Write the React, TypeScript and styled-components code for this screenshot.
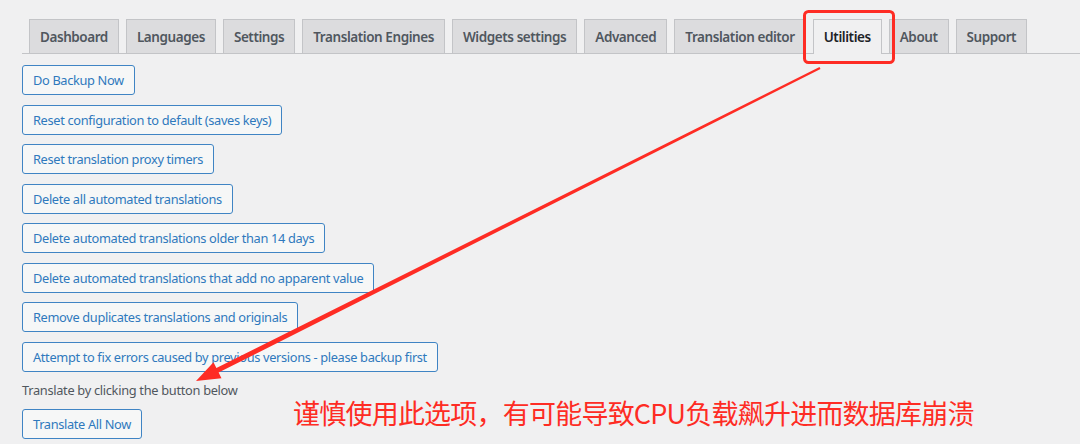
import React from 'react';
import styled, { createGlobalStyle } from 'styled-components';

const GlobalStyle = createGlobalStyle`
  html, body {
    margin: 0;
    padding: 0;
    background: #f0f0f1;
  }
  body {
    font-family: "Noto Sans", "Liberation Sans", sans-serif;
    color: #3c434a;
  }
`;

const Page = styled.div`
  position: relative;
  width: 1080px;
  height: 444px;
  overflow: hidden;
  padding-left: 22px;
  box-sizing: border-box;
`;

const TabBar = styled.nav`
  display: flex;
  align-items: flex-end;
  padding-top: 19px;
  padding-left: 7px;
  border-bottom: 1px solid #c3c4c7;
  gap: 7px;
`;

const Tab = styled.a<{ $active?: boolean }>`
  display: block;
  padding: 5px 10px 4px;
  font-size: 13.5px;
  font-weight: 600;
  line-height: 24px;
  letter-spacing: -0.43px;
  border: 1px solid #c3c4c7;
  border-bottom: none;
  margin-bottom: ${(p) => (p.$active ? '-1px' : '0')};
  padding-bottom: ${(p) => (p.$active ? '5px' : '4px')};
  background: ${(p) => (p.$active ? '#f0f0f1' : '#dcdcde')};
  color: ${(p) => (p.$active ? '#1d2327' : '#50575e')};
  white-space: nowrap;
  text-decoration: none;
`;

const Tools = styled.div`
  display: flex;
  flex-direction: column;
  align-items: flex-start;
  gap: 9.5px;
  padding-top: 11px;
`;

const Button = styled.button`
  height: 30px;
  padding: 0 10px;
  font-family: inherit;
  font-size: 12.8px;
  letter-spacing: -0.34px;
  color: #2f79bd;
  background: #f6f7f7;
  border: 1px solid #3f84c4;
  border-radius: 3px;
  cursor: pointer;
  white-space: nowrap;
`;

const Hint = styled.p`
  margin: 0;
  font-size: 12.8px;
  letter-spacing: -0.3px;
  line-height: 18px;
  color: #50575e;
`;

const Overlay = styled.svg`
  position: absolute;
  left: 0;
  top: 0;
  pointer-events: none;
`;

const Warning = styled.div`
  position: absolute;
  left: 293px;
  top: 395px;
  font-family: "Noto Sans CJK SC", "Noto Sans", sans-serif;
  font-size: 27px;
  letter-spacing: -0.78px;
  line-height: 36px;
  color: #fe2c24;
  white-space: nowrap;
`;

const tabs = [
  'Dashboard',
  'Languages',
  'Settings',
  'Translation Engines',
  'Widgets settings',
  'Advanced',
  'Translation editor',
  'Utilities',
  'About',
  'Support',
];

const actions = [
  'Do Backup Now',
  'Reset configuration to default (saves keys)',
  'Reset translation proxy timers',
  'Delete all automated translations',
  'Delete automated translations older than 14 days',
  'Delete automated translations that add no apparent value',
  'Remove duplicates translations and originals',
  'Attempt to fix errors caused by previous versions - please backup first',
];

const App: React.FC = () => {
  return (
    <>
      <GlobalStyle />
      <Page>
        <TabBar>
          {tabs.map((t) => (
            <Tab key={t} $active={t === 'Utilities'}>
              {t}
            </Tab>
          ))}
        </TabBar>
        <Tools>
          {actions.map((a) => (
            <Button key={a}>{a}</Button>
          ))}
          <Hint>Translate by clicking the button below</Hint>
          <Button>Translate All Now</Button>
        </Tools>

        {/* red annotation drawn over the screenshot */}
        <Overlay width="1080" height="444" viewBox="0 0 1080 444">
          <rect x="804.5" y="11.5" width="89" height="51" rx="4" fill="none" stroke="#fe2c24" strokeWidth="3" />
          <polygon
            fill="#fe2c24"
            points="819.5,67.1 216.4,368 213.5,362.2 196,381 221.5,378.3 218.6,372.5 820.5,68.9"
          />
        </Overlay>
        <Warning>谨慎使用此选项，有可能导致CPU负载飙升进而数据库崩溃</Warning>
      </Page>
    </>
  );
};

export default App;
